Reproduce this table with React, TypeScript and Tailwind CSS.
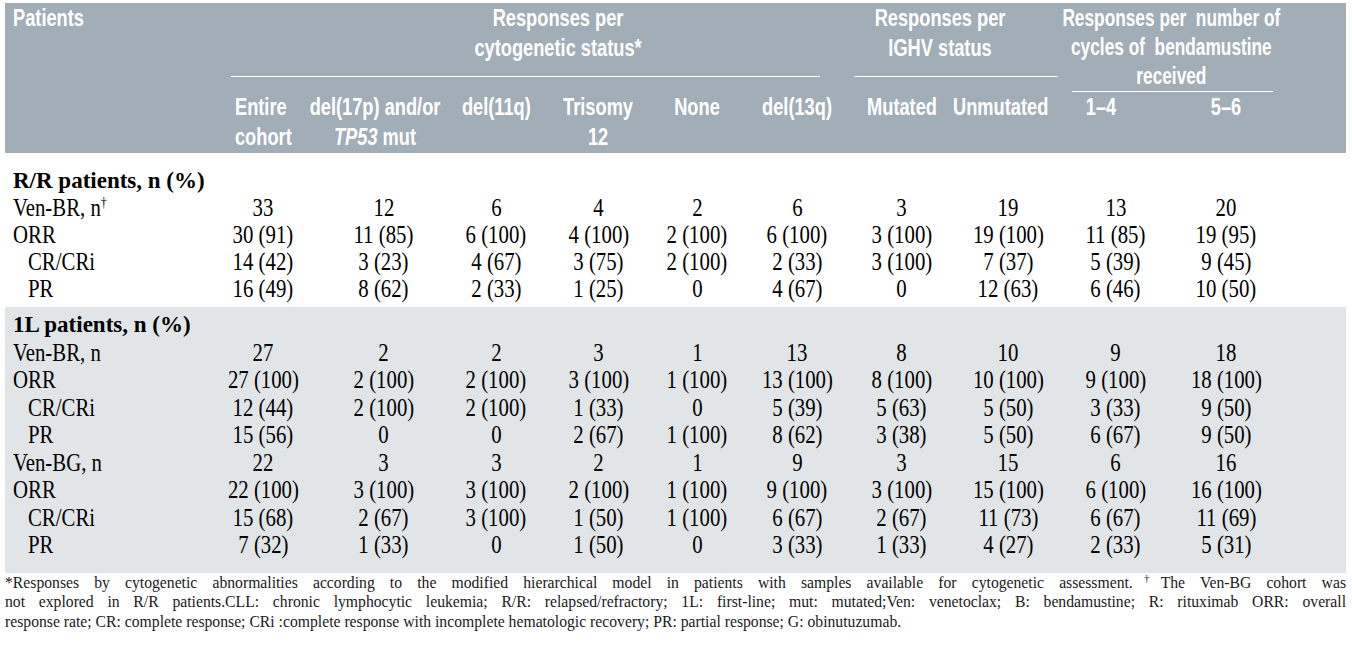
import React from "react";

const GRID =
  "grid grid-cols-[197px_122px_119px_106px_99px_98px_102px_107px_106px_109px_112px_1fr]";

type RowData = { label: React.ReactNode; indent?: boolean; values: string[] };

const Dagger = () => (
  <span className="relative -top-[9px] text-[15px] leading-none">†</span>
);

const rrRows: RowData[] = [
  { label: <>Ven-BR, n<Dagger /></>, values: ["33", "12", "6", "4", "2", "6", "3", "19", "13", "20"] },
  { label: "ORR", values: ["30 (91)", "11 (85)", "6 (100)", "4 (100)", "2 (100)", "6 (100)", "3 (100)", "19 (100)", "11 (85)", "19 (95)"] },
  { label: "CR/CRi", indent: true, values: ["14 (42)", "3 (23)", "4 (67)", "3 (75)", "2 (100)", "2 (33)", "3 (100)", "7 (37)", "5 (39)", "9 (45)"] },
  { label: "PR", indent: true, values: ["16 (49)", "8 (62)", "2 (33)", "1 (25)", "0", "4 (67)", "0", "12 (63)", "6 (46)", "10 (50)"] },
];

const firstLineRows: RowData[] = [
  { label: "Ven-BR, n", values: ["27", "2", "2", "3", "1", "13", "8", "10", "9", "18"] },
  { label: "ORR", values: ["27 (100)", "2 (100)", "2 (100)", "3 (100)", "1 (100)", "13 (100)", "8 (100)", "10 (100)", "9 (100)", "18 (100)"] },
  { label: "CR/CRi", indent: true, values: ["12 (44)", "2 (100)", "2 (100)", "1 (33)", "0", "5 (39)", "5 (63)", "5 (50)", "3 (33)", "9 (50)"] },
  { label: "PR", indent: true, values: ["15 (56)", "0", "0", "2 (67)", "1 (100)", "8 (62)", "3 (38)", "5 (50)", "6 (67)", "9 (50)"] },
  { label: "Ven-BG, n", values: ["22", "3", "3", "2", "1", "9", "3", "15", "6", "16"] },
  { label: "ORR", values: ["22 (100)", "3 (100)", "3 (100)", "2 (100)", "1 (100)", "9 (100)", "3 (100)", "15 (100)", "6 (100)", "16 (100)"] },
  { label: "CR/CRi", indent: true, values: ["15 (68)", "2 (67)", "3 (100)", "1 (50)", "1 (100)", "6 (67)", "2 (67)", "11 (73)", "6 (67)", "11 (69)"] },
  { label: "PR", indent: true, values: ["7 (32)", "1 (33)", "0", "1 (50)", "0", "3 (33)", "1 (33)", "4 (27)", "2 (33)", "5 (31)"] },
];

function BodyRow({ row, h }: { row: RowData; h: string }) {
  return (
    <div className={`${GRID} ${h} leading-[27px]`}>
      <div className={row.indent ? "pl-[23px]" : "pl-[8px]"}>
        <div className="origin-left scale-x-[0.8] whitespace-nowrap">{row.label}</div>
      </div>
      {row.values.map((v, i) => (
        <div key={i} className="flex justify-center">
          <div className="scale-x-[0.8] whitespace-nowrap">{v}</div>
        </div>
      ))}
    </div>
  );
}

function SubHead({
  children,
  className = "",
  align = "text-center",
}: {
  children: React.ReactNode;
  className?: string;
  align?: string;
}) {
  return (
    <div className={`flex justify-center ${className}`}>
      <div className={`scale-x-[0.76] whitespace-nowrap ${align}`}>{children}</div>
    </div>
  );
}

export default function App() {
  return (
    <div className="pt-[3px] pl-[5px] w-[1352px] bg-white">
      <div className="w-[1341px]">
        {/* Header */}
        <div className="bg-[#a2aeb7] text-white font-['Liberation_Sans',Arial,sans-serif] font-bold text-[24px] leading-[30px] pb-[1px]">
          <div className={GRID}>
            <div className="pl-[8px]">
              <div className="origin-left scale-x-[0.76]">Patients</div>
            </div>

            <div className="col-span-6 flex flex-col">
              <div className="pl-[66px] flex justify-center">
                <div className="scale-x-[0.76] whitespace-nowrap text-center">
                  Responses per
                  <br />
                  cytogenetic status*
                </div>
              </div>
              <div className="mt-[13px] ml-[29px] mr-[28px] h-px bg-white" />
            </div>

            <div className="col-span-2 flex flex-col">
              <div className="pr-[29px] flex justify-center">
                <div className="scale-x-[0.76] whitespace-nowrap text-center">
                  Responses per
                  <br />
                  IGHV status
                </div>
              </div>
              <div className="mt-[13px] ml-[6px] mr-[3px] h-px bg-white" />
            </div>

            <div className="col-span-2 flex flex-col">
              <div className="flex justify-center leading-[29px]">
                <div className="scale-x-[0.72] whitespace-nowrap text-center">
                  Responses per&nbsp; number of
                  <br />
                  cycles of&nbsp; bendamustine
                  <br />
                  received
                </div>
              </div>
              <div className="mt-[1px] ml-[11px] mr-[9px] h-px bg-white" />
            </div>
          </div>

          <div className={GRID}>
            <div />
            <SubHead align="text-left">
              Entire
              <br />
              cohort
            </SubHead>
            <SubHead className="pr-[17px]">
              del(17p) and/or
              <br />
              <i>TP53</i> mut
            </SubHead>
            <SubHead>del(11q)</SubHead>
            <SubHead>
              Trisomy
              <br />
              12
            </SubHead>
            <SubHead>None</SubHead>
            <SubHead>del(13q)</SubHead>
            <SubHead>Mutated</SubHead>
            <SubHead className="pr-[14px]">Unmutated</SubHead>
            <SubHead className="pr-[28px]">1–4</SubHead>
            <SubHead>5–6</SubHead>
            <div className="h-[60px]" />
          </div>
        </div>

        {/* Body */}
        <div className="font-['Liberation_Serif','Times_New_Roman',serif] text-black text-[26px]">
          <div className="pt-[14px]">
            <div className="pl-[8px] text-[23px] font-bold leading-[27px] h-[27px]">
              R/R patients, n (%)
            </div>
            <div>
              {rrRows.map((r, i) => (
                <BodyRow key={i} row={r} h="h-[27px]" />
              ))}
            </div>
          </div>

          <div className="mt-[5px] bg-[#e1e5e8] pt-[4px] pb-[14px]">
            <div className="pl-[8px] text-[23px] font-bold leading-[27px] h-[27.5px]">
              1L patients, n (%)
            </div>
            {firstLineRows.map((r, i) => (
              <BodyRow key={i} row={r} h="h-[27.5px]" />
            ))}
          </div>
        </div>

        {/* Footnote */}
        <div className="font-['Liberation_Serif','Times_New_Roman',serif] text-[15.7px] leading-[19.5px] text-[#1a1a1a]">
          <div className="text-justify [text-align-last:justify]">
            *Responses by cytogenetic abnormalities according to the modified hierarchical model in patients with samples available for cytogenetic assessment.<sup className="text-[11px] leading-none">†</sup>The Ven-BG cohort was
          </div>
          <div className="text-justify [text-align-last:justify]">
            not explored in R/R patients.CLL: chronic lymphocytic leukemia; R/R: relapsed/refractory; 1L: first-line; mut: mutated;Ven: venetoclax; B: bendamustine; R: rituximab ORR: overall
          </div>
          <div>
            response rate; CR: complete response; CRi :complete response with incomplete hematologic recovery; PR: partial response; G: obinutuzumab.
          </div>
        </div>
      </div>
    </div>
  );
}
